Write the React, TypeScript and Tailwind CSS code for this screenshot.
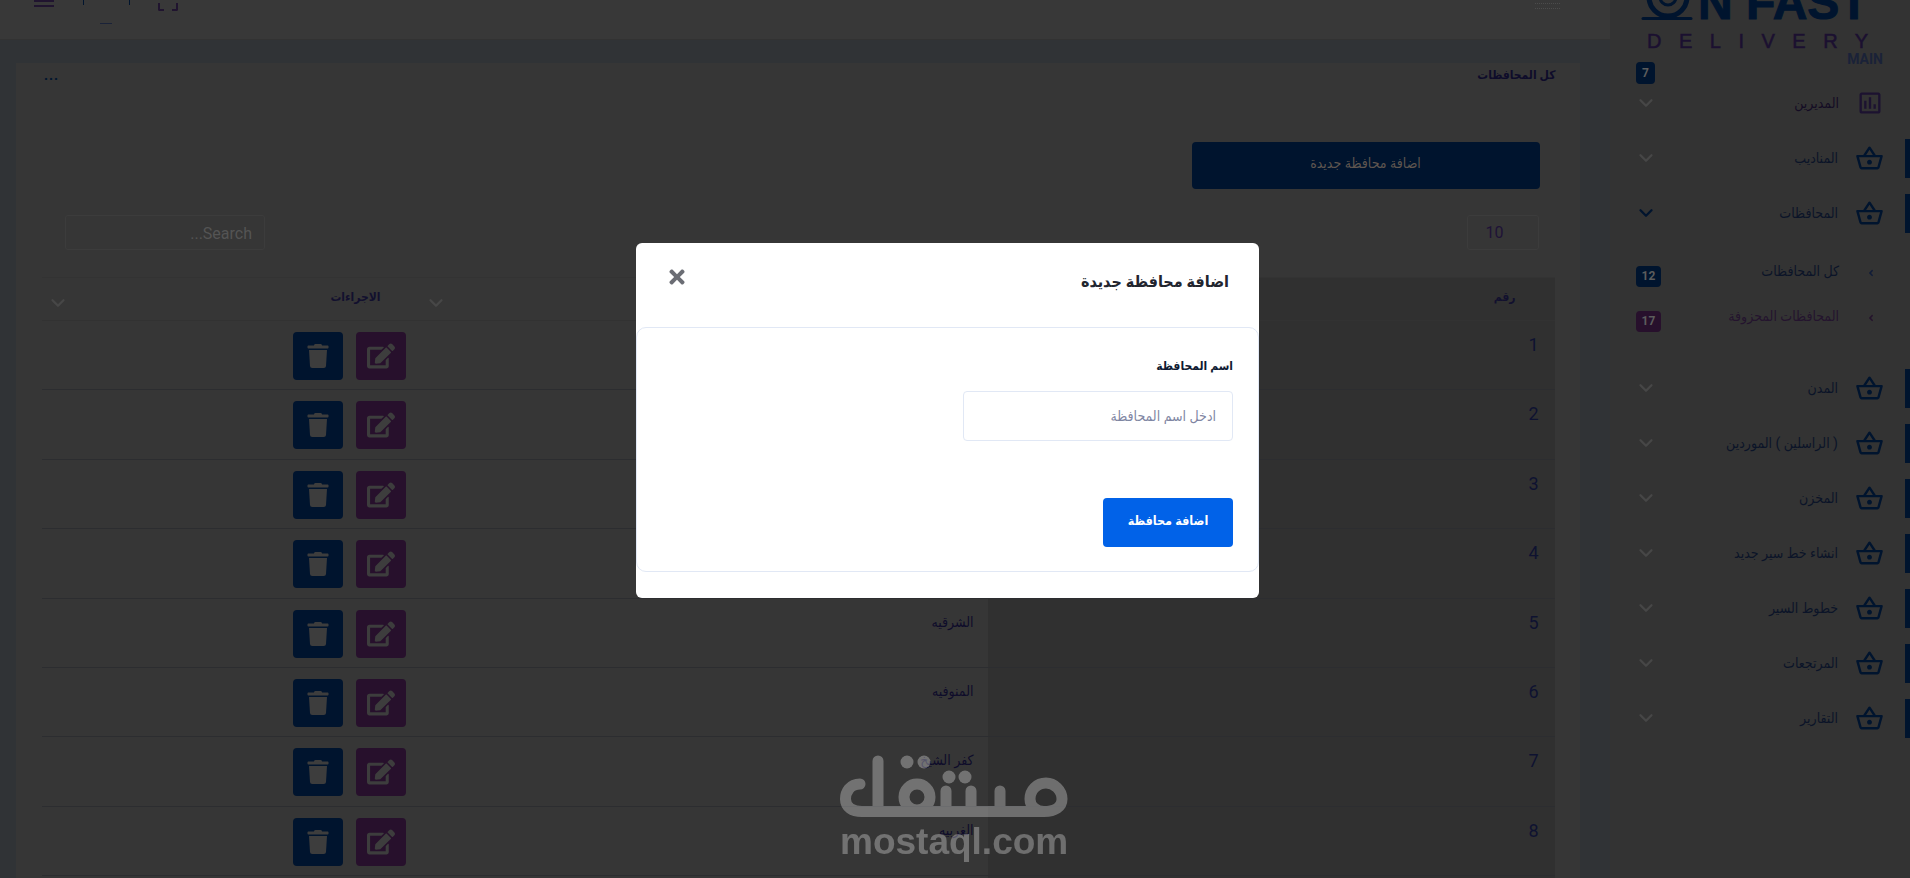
import React from 'react';
import { FaEdit, FaTrash, FaTimes, FaAngleLeft } from 'react-icons/fa';
import { MdOutlineShoppingBasket, MdOutlineAssessment } from 'react-icons/md';
import { ChevronDown } from 'lucide-react';

const governorates = [
  'القاهرة',
  'الجيزة',
  'الاسكندرية',
  'الدقهلية',
  'الشرقيه',
  'المنوفيه',
  'كفر الشيخ',
  'الغربيه',
  'البحيرة',
];

const topMenu = ['المديرين', 'المناديب', 'المحافظات'];
const bottomMenu = ['المدن', '( الراسلين ) الموردين', 'المخزن', 'انشاء خط سير جديد', 'خطوط السير', 'المرتجعات', 'التقارير'];

const MenuRow = ({ label, open, chart }: { label: string; open?: boolean; chart?: boolean }) => (
  <div className="relative flex h-[55px] items-center pr-[26px] pl-[25px]">
    {!chart && <span className="absolute top-[8px] right-0 h-[39px] w-[5px] bg-[#00142e]" />}
    {chart ? (
      <MdOutlineAssessment className="h-[28px] w-[28px] shrink-0 text-[#1c1230]" />
    ) : (
      <MdOutlineShoppingBasket className="h-[29px] w-[29px] shrink-0 text-[#00142e]" />
    )}
    <span className={`mr-[17px] flex-1 text-[14px] ${chart ? 'text-[#140c24]' : 'text-[#0b1428]'}`}>{label}</span>
    <ChevronDown strokeWidth={2.5} className={`h-[22px] w-[22px] ${open ? 'text-[#00142e]' : 'text-[#474747]'}`} />
  </div>
);

const SubRow = ({ label, count, purple }: { label: string; count: number; purple?: boolean }) => (
  <div className="flex h-[45px] items-start pr-[34px] pl-[26px] pt-[14px]">
    <FaAngleLeft className={`mt-[6px] h-[10px] w-[10px] shrink-0 ${purple ? 'text-[#24122c]' : 'text-[#101c38]'}`} />
    <span className={`mr-[27px] flex-1 text-[14px] leading-[18px] ${purple ? 'text-[#24142e]' : 'text-[#0b1428]'}`}>{label}</span>
    <span className={`mt-[4px] flex h-[21px] w-[25px] items-center justify-center rounded-[4px] font-["Roboto"] text-[12px] font-bold text-[#5c5c5c] ${purple ? 'bg-[#27102c]' : 'bg-[#00142e]'}`}>
      {count}
    </span>
  </div>
);

const Sidebar = () => (
  <aside className="h-full w-[300px] shrink-0 overflow-hidden bg-[#333333]">
    <div dir="ltr" className="h-[51px]">
      <div className="flex h-[20px] items-end overflow-hidden pl-[31px]">
        <svg width="52" height="20" viewBox="0 0 52 20" className="mr-[5px] shrink-0 text-[#00142e]">
          <circle cx="27" cy="-3" r="19" fill="none" stroke="currentColor" strokeWidth="5" />
          <circle cx="27" cy="-3" r="8" fill="none" stroke="currentColor" strokeWidth="3" />
          <path d="M2 18.5H50" stroke="currentColor" strokeWidth="3" strokeLinecap="round" />
        </svg>
        <span className='-mb-[7px] font-["Liberation_Sans"] text-[48px] leading-none font-bold text-[#00142e] [-webkit-text-stroke:1px_#00142e]'>N FAST</span>
      </div>
      <div className='mt-[11px] pl-[37px] font-["Liberation_Sans"] text-[20px] leading-[20px] tracking-[17.5px] whitespace-nowrap text-[#1b1030] [-webkit-text-stroke:0.5px_#1b1030]'>
        DELIVERY
      </div>
    </div>
    <div dir="ltr" className='relative h-[24.5px] pr-[27px] text-right font-["Roboto"] text-[14px] leading-[16px] font-bold text-[#1a2238]'>
      MAIN
      <span className="absolute top-[11px] left-[26px] flex h-[22px] w-[19px] items-center justify-center rounded-[4px] bg-[#00142e] text-[12px] text-[#5c5c5c]">7</span>
    </div>
    <MenuRow label={topMenu[0]} chart />
    <MenuRow label={topMenu[1]} />
    <MenuRow label={topMenu[2]} open />
    <div className="pt-[7px] pb-[23px]">
      <SubRow label="كل المحافظات" count={12} />
      <SubRow label="المحافظات المحزوفة" count={17} purple />
    </div>
    {bottomMenu.map((label) => (
      <MenuRow key={label} label={label} />
    ))}
  </aside>
);

const TopBar = () => (
  <header className="relative h-[40px] shrink-0 overflow-hidden border-b border-[#323232] bg-[#383838]">
    <div className="absolute top-[3px] left-[1535px] h-[6px] w-[25px] border-y border-dotted border-[#4c4c4c]" />
    <div className="absolute top-0 left-[34px] h-[7px] w-[20px] border-y-2 border-[#20142f]" />
    <span className="absolute top-0 left-[83px] h-[5px] w-px bg-[#00142e]" />
    <span className="absolute top-0 left-[129px] h-[5px] w-px bg-[#00142e]" />
    <span className="absolute top-[23px] left-[100px] h-px w-[12px] bg-[#1a2238]" />
    <span className="absolute top-[3px] left-[158px] h-[8px] w-[20px] rounded-b-[2px] border-x-2 border-b-2 border-[#20142f] [clip-path:polygon(0_0,30%_0,30%_100%,70%_100%,70%_0,100%_0,100%_100%,0_100%)]" />
  </header>
);

const Table = () => (
  <table className="mx-[25px] mt-[27px] w-[1513px] table-fixed border-t border-[#333333]">
    <colgroup>
      <col className="w-[567px]" />
      <col className="w-[562px]" />
      <col className="w-[384px]" />
    </colgroup>
    <thead>
      <tr className="h-[43px] border-b border-[#323232]">
        <th className="relative bg-[#303030] pr-[39px] pb-[4px] text-right text-[12px] font-bold text-[#12102e]">
          رقم
          <ChevronDown strokeWidth={2.5} className="absolute top-[14px] left-[11px] h-[22px] w-[22px] text-[#474747]" />
        </th>
        <th className="relative pr-[30px] pb-[4px] text-right text-[12px] font-bold text-[#12102e]">
          اسم المحافظة
          <ChevronDown strokeWidth={2.5} className="absolute top-[14px] left-[-1px] h-[22px] w-[22px] text-[#474747]" />
        </th>
        <th className="relative pr-[45px] pb-[4px] text-right text-[12px] font-bold text-[#12102e]">
          الاجراءات
          <ChevronDown strokeWidth={2.5} className="absolute top-[14px] left-[5px] h-[22px] w-[22px] text-[#474747]" />
        </th>
      </tr>
    </thead>
    <tbody>
      {governorates.map((name, i) => (
        <tr key={name} className="h-[69.4px] border-b border-[#2c2d30] align-top">
          <td className='bg-[#303030] pt-[13px] pr-[16px] font-["Roboto"] text-[18px] leading-[22px] text-[#0e1230]'>{i + 1}</td>
          <td className="pt-[14px] pr-[14px] text-[14px] leading-[18px] text-[#0e0c2a]">{name}</td>
          <td className="pt-[11px] pr-[20px]">
            <div className="flex gap-[13px]">
              <button className="flex h-[48px] w-[50px] items-center justify-center rounded-[4px] bg-[#27102c]">
                <FaEdit className="h-[28px] w-[28px] text-[#3d3d3d]" />
              </button>
              <button className="flex h-[48px] w-[50px] items-center justify-center rounded-[4px] bg-[#00142e]">
                <FaTrash className="h-[24px] w-[24px] text-[#3d3d3d]" />
              </button>
            </div>
          </td>
        </tr>
      ))}
    </tbody>
  </table>
);

const Card = () => (
  <section className="h-[1000px] w-[1563.5px] bg-[#363636]">
    <div className="flex items-center justify-between pt-[2px] pr-[24px] pl-[28px]">
      <h3 className="text-[12px] leading-[20px] font-bold text-[#0e0c2a]">كل المحافظات</h3>
      <span className="text-[14px] leading-[20px] font-bold tracking-[1px] text-[#00142e]">...</span>
    </div>
    <button className="mt-[57px] mr-[40px] block h-[47px] w-[348px] rounded-[4px] bg-[#00142e] pb-[4px] text-[14px] text-[#5f5650]">
      اضافة محافظة جديدة
    </button>
    <div className="mt-[26px] flex justify-between pr-[41px] pl-[49px]">
      <div className='flex h-[35px] w-[72px] items-center rounded-[3px] border border-[#3c3c3c] pt-[1px] pr-[34px] font-["Roboto"] text-[16px] text-[#1e1236]'>
        <span dir="ltr">10</span>
      </div>
      <div className='flex h-[35px] w-[200px] items-center rounded-[3px] border border-[#3c3c3c] pt-[3px] pr-[12px] font-["Roboto"] text-[16px] text-[#545454]'>
        Search...
      </div>
    </div>
    <Table />
  </section>
);

const Modal = () => (
  <div className="fixed inset-0 flex justify-center pt-[243px] pr-[15px]">
    <div className="h-[355px] w-[623px] rounded-[6px] bg-white">
      <div className="flex h-[84px] items-start justify-between pr-[30px] pl-[30px]">
        <h4 className="mt-[27px] text-[16px] leading-[24px] font-bold text-[#22252f]">اضافة محافظة جديدة</h4>
        <FaTimes className="mt-[23px] h-[22px] w-[22px] text-[#6b6d74]" />
      </div>
      <div className="h-[245px] rounded-[10px] border border-[#e1e8f5] px-[25px]">
        <label className="mt-[28px] block text-[12px] leading-[20px] font-bold text-[#0f1a33]">اسم المحافظة</label>
        <input
          placeholder="ادخل اسم المحافظة"
          className="mt-[15px] block h-[50px] w-[270px] rounded-[4px] border border-[#e1e8f5] px-[16px] text-[14px] outline-none placeholder:text-[#7f86a3]"
        />
        <button className="mt-[57px] block h-[49px] w-[130px] rounded-[4px] bg-[#0162e8] pb-[3px] text-[12.5px] font-bold text-white">
          اضافة محافظة
        </button>
      </div>
    </div>
  </div>
);

const Watermark = () => (
  <div dir="ltr" className="fixed top-[755px] left-[840px] w-[228px]">
    <svg width="228" height="67" viewBox="0 0 228 67" className="block opacity-30" fill="none" stroke="white" strokeWidth="11" strokeLinecap="round" strokeLinejoin="round">
      <path d="M20 29C10 29 5.500 37 5.500 44C5.500 52 12 56.500 22 56.500H204C215 56.500 222 52 222 44C222 35 214 28 206 28C197 28 190 35 190 44C190 51 196 56.500 204 56.500" />
      <path d="M38 6V56" />
      <circle cx="77" cy="42" r="13" />
      <path d="M106 36V56M131 36V56M160 36V56" />
      <circle cx="67" cy="7" r="6.500" fill="white" stroke="none" />
      <circle cx="84" cy="7" r="6.500" fill="white" stroke="none" />
      <circle cx="109" cy="22" r="6.500" fill="white" stroke="none" />
      <circle cx="125" cy="22" r="6.500" fill="white" stroke="none" />
    </svg>
    <div className='mt-[1px] text-center font-["Liberation_Sans"] text-[37px] leading-[38px] font-bold whitespace-nowrap text-white/30'>mostaql.com</div>
  </div>
);

export default function App() {
  return (
    <div dir="rtl" className='flex h-screen overflow-hidden bg-[#303336] font-["Roboto","DejaVu_Sans_Condensed","DejaVu_Sans",sans-serif]'>
      <Sidebar />
      <main className="flex h-full flex-1 flex-col overflow-hidden">
        <TopBar />
        <div className="pt-[23px] pr-[30.5px]">
          <Card />
        </div>
      </main>
      <Modal />
      <Watermark />
    </div>
  );
}
